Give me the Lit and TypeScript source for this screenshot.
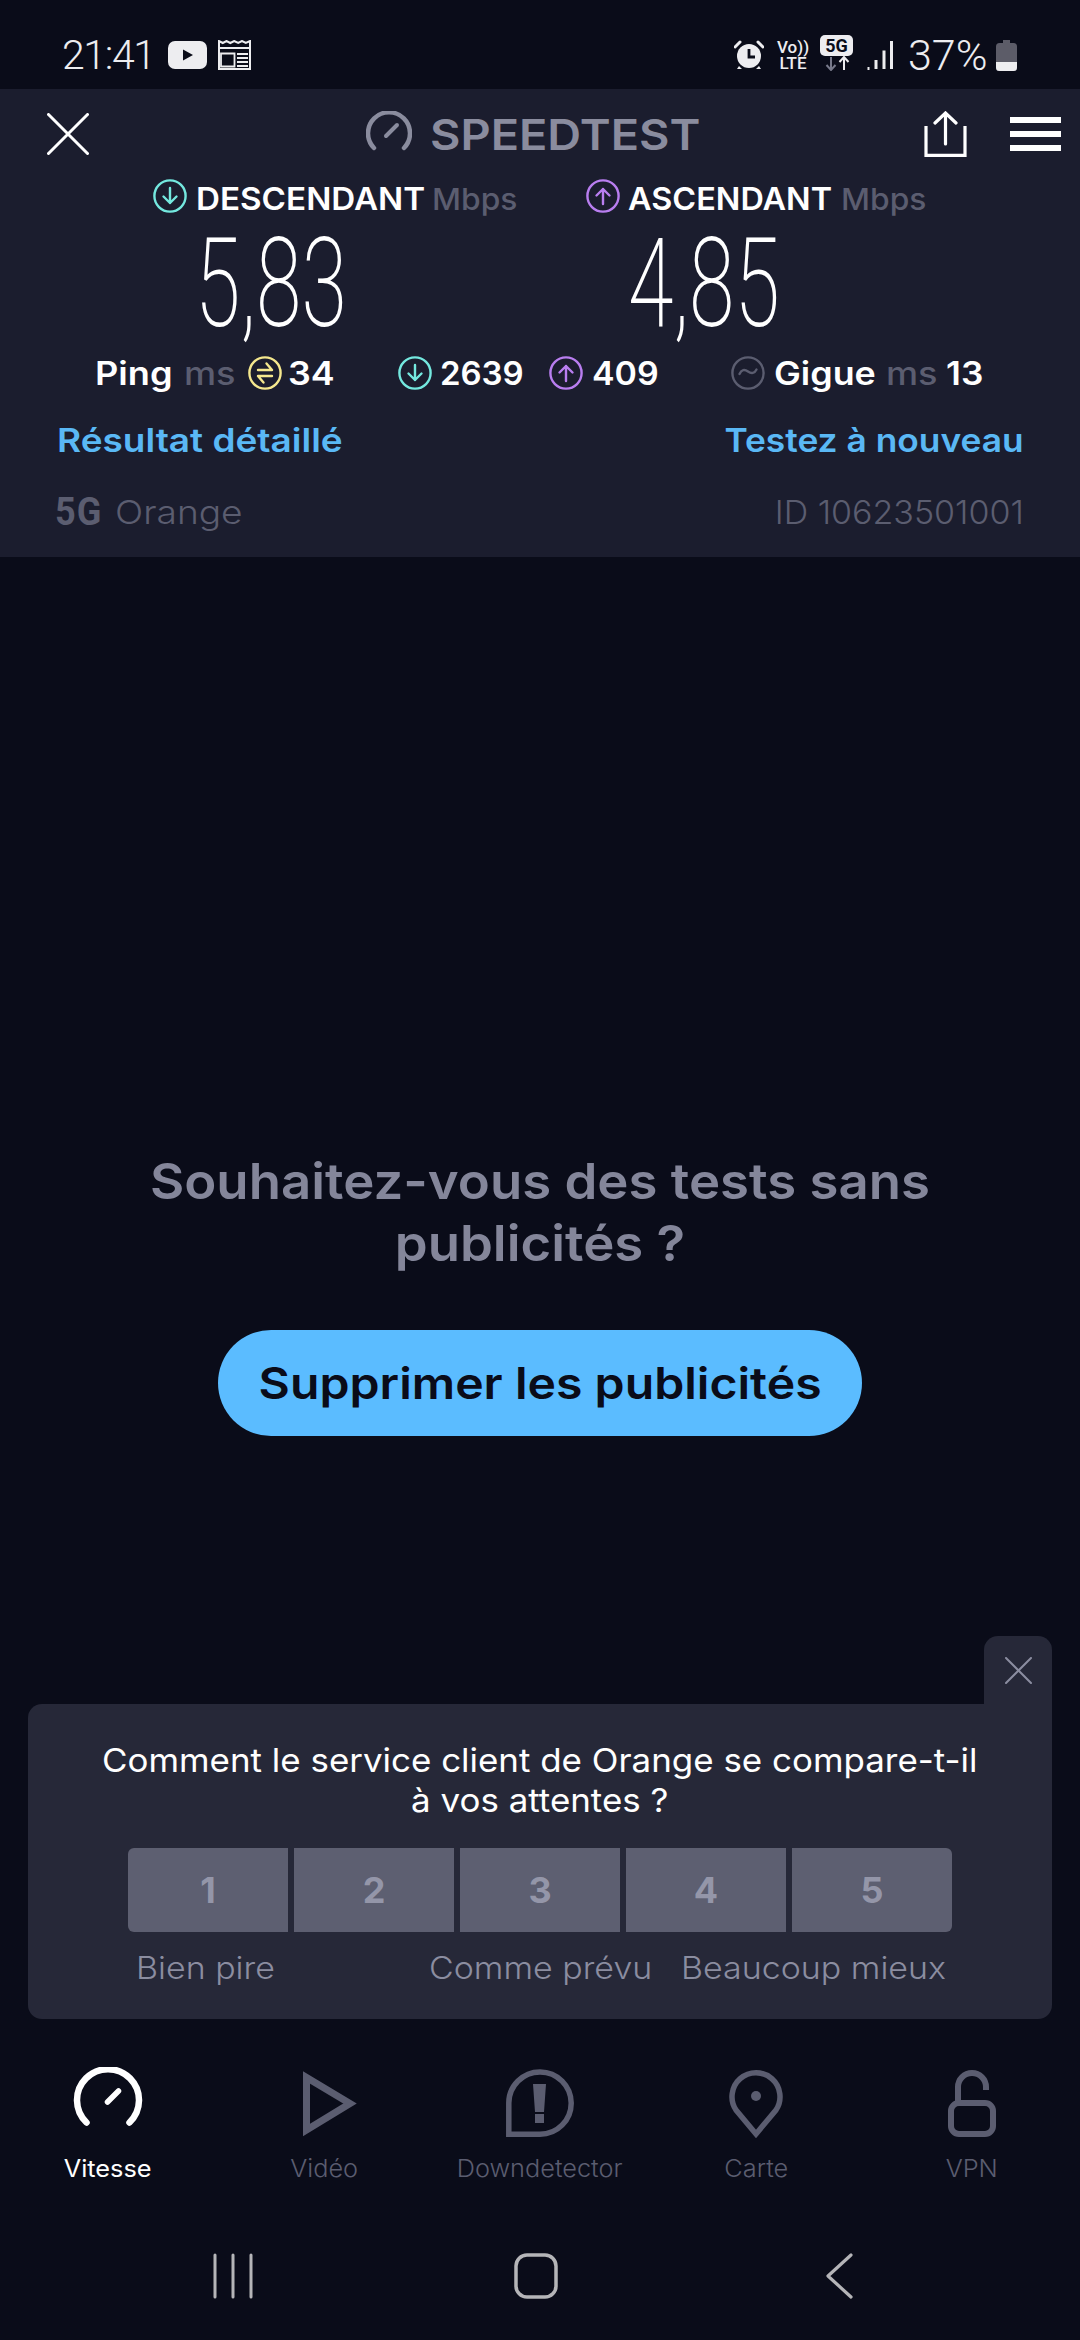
import { LitElement, html, css, svg } from "lit";
import { customElement } from "lit/decorators.js";

const circle = (color: string, inner: unknown) => html`<svg class="ci" viewBox="0 0 34 34" fill="none" stroke=${color} stroke-width="2.4" stroke-linecap="round" stroke-linejoin="round"><circle cx="17" cy="17" r="15.6"/>${inner}</svg>`;
const down = svg`<path d="M17 9v15M10.5 17.5 17 24l6.5-6.5"/>`;
const up = svg`<path d="M17 25V10M10.5 16.5 17 10l6.5 6.5"/>`;
const ping = svg`<path d="M10 14h14l-5.500-6.500M24 20H10l5.500 6.500"/>`;
const jitter = svg`<path d="M8.5 18c2-4.5 5-5 8.5-2.5s6.500 2 8.500-2" />`;

@customElement("app-root")
export class AppRoot extends LitElement {
  static styles = css`
    :host { display: block; width: 1080px; height: 2340px; background: #0a0c19; font-family: Inter, "Noto Sans", sans-serif; color: #fff; overflow: hidden; }
    .page { height: 2340px; display: flex; flex-direction: column; }
    svg { display: block; flex: none; }
    .status { height: 89px; flex: none; box-sizing: border-box; display: flex; align-items: center; padding: 21px 63px 0 62px; background: #0a0c19; color: #ededf0; }
    .time, .pct { font-family: Roboto, sans-serif; font-weight: 300; line-height: 40px; }
    .time { width: 88px; font-size: 41px; letter-spacing: -1.4px; margin-right: 18px; white-space: nowrap; }
    .yt { margin-right: 11px; }
    .grow { flex: 1; }
    .volte { width: 32px; margin: 0 11px 0 13px; font-family: Roboto, sans-serif; font-weight: 500; font-size: 17px; line-height: 16px; text-align: center; white-space: nowrap; }
    .pct { margin: 0 8px 0 15px; width: 80px; white-space: nowrap; font-size: 43px; }
    .fiveg { width: 33px; margin-right: 13px; display: flex; flex-direction: column; align-items: center; margin-top: -4px; }
    .fiveg b { display: block; width: 33px; height: 21px; border-radius: 5px; background: #ededf0; color: #0a0c19; font: 700 18px/21px Roboto, sans-serif; text-align: center; }
    .panel { height: 468px; flex: none; box-sizing: border-box; background: #1b1d2e; display: flex; flex-direction: column; }
    .top { height: 90px; flex: none; display: flex; align-items: center; box-sizing: border-box; padding: 0 19px 0 47px; }
    .brand { display: flex; align-items: center; gap: 18px; margin-left: 277px; margin-right: 224px; color: #8a8c9e; }
    .brand svg { margin-top: -6px; }
    .brand span { font-size: 42px; font-weight: 600; line-height: 50px; white-space: nowrap; width: 270px; margin-top: 1px; transform: scaleX(1.115); transform-origin: left center; }
    .speeds { display: flex; padding-left: 153px; height: 151px; flex: none; }
    .sp { display: flex; flex-direction: column; }
    .sp.a { width: 433px; }
    .lab { display: flex; align-items: center; height: 34px; white-space: nowrap; }
    .lab b { font-size: 31px; font-weight: 600; margin: 5px 0 0 9px; line-height: 34px; width: 227px; transform: scaleX(1.07); transform-origin: left center; }
    .sp.b .lab b { width: 204px; transform: scaleX(1.045); margin-left: 8px; }
    .lab i { font-style: normal; font-size: 30px; font-weight: 500; color: #5b5d70; margin: 5px 0 0 9px; line-height: 34px; transform: scaleX(1.06); transform-origin: left center; }
    .ci { width: 34px; height: 34px; }
    .num { font-family: Roboto, sans-serif; font-weight: 200; font-size: 125px; line-height: 100px; margin-top: 21px; margin-left: 42px; transform: scaleX(.66); transform-origin: left center; white-space: nowrap; }
    .stats { display: flex; align-items: center; height: 34px; margin-top: 26px; padding-left: 95px; font-size: 32px; font-weight: 600; white-space: nowrap; flex: none; }
    .stats .ci { margin-right: 6px; }
    .stats span, .stats i { transform-origin: left center; }
    .stats i { font-style: normal; color: #5b5d70; font-weight: 500; width: 52px; transform: scaleX(1.13); }
    .s1 { width: 77px; transform: scaleX(1.13); }
    .s2 { margin-left: 12px; margin-right: 12px; }
    .s3 { width: 44px; margin-right: 66px; transform: scaleX(1.12); }
    .s4 { width: 82px; margin-left: 2px; margin-right: 27px; transform: scaleX(1.03); }
    .s5 { width: 66px; margin-left: 3px; margin-right: 73px; transform: scaleX(1.06); }
    .s6 { width: 102px; margin-left: 3px; margin-right: 10px; transform: scaleX(1.12); }
    .s7 { margin-left: 8px; transform: scaleX(1.1); }
    .links { display: flex; justify-content: space-between; padding: 0 56px 0 57px; margin-top: 30px; height: 40px; line-height: 40px; color: #5ab8f5; font-size: 33px; font-weight: 600; flex: none; white-space: nowrap; }
    .links .l { transform: scaleX(1.12); transform-origin: left center; }
    .links .r { transform: scaleX(1.07); transform-origin: right center; }
    .meta { display: flex; justify-content: space-between; align-items: center; padding: 0 56px 0 55px; margin-top: 32px; height: 40px; color: #5b5d70; font-size: 33px; font-weight: 300; flex: none; white-space: nowrap; }
    .meta div { display: flex; align-items: center; }
    .meta .op { transform: scaleX(1.125); transform-origin: left center; margin-left: -1px; }
    .meta .id { transform: scaleX(1.03); transform-origin: right center; }
    .meta b { font: 700 38px/40px Roboto, sans-serif; width: 47px; margin-right: 14px; transform: scaleX(.95); transform-origin: left center; letter-spacing: 1px; }
    .main { flex: 1; display: flex; flex-direction: column; align-items: center; min-height: 0; }
    .main > * { flex: none; }
    .ask { margin: 593px 0 0; width: 900px; text-align: center; color: #84869a; font-size: 50px; font-weight: 600; line-height: 62px; transform: scaleX(1.055); }
    .cta { margin-top: 56px; width: 644px; height: 106px; border-radius: 53px; background: #5bbcff; color: #0a0c19; font-size: 44px; font-weight: 600; display: flex; align-items: center; justify-content: center; }
    .cta span { transform: scaleX(1.095); white-space: nowrap; }
    .survey { margin-top: 268px; width: 1024px; position: relative; background: #262838; border-radius: 14px 0 14px 14px; box-sizing: border-box; height: 315px; padding-top: 36px; display: flex; flex-direction: column; align-items: center; }
    .tab { position: absolute; right: 0; top: -68px; width: 68px; height: 68px; background: #262838; border-radius: 14px 14px 0 0; display: flex; align-items: center; justify-content: center; }
    .q { font-size: 33px; line-height: 40px; text-align: center; font-weight: 400; white-space: nowrap; transform: scaleX(1.058); }
    .scale { margin-top: 28px; display: flex; gap: 6px; }
    .scale div { width: 160px; height: 84px; background: #5d5f71; color: #9496a9; font-size: 36px; font-weight: 700; display: flex; align-items: center; justify-content: center; }
    .scale div:first-child { border-radius: 6px 0 0 6px; }
    .scale div:last-child { border-radius: 0 6px 6px 0; }
    .anchors { width: 100%; margin-top: 16px; height: 40px; color: #8b8da0; font-size: 31px; font-weight: 300; line-height: 40px; display: flex; white-space: nowrap; }
    .anchors span { transform: scaleX(1.095); transform-origin: left center; }
    .anchors span:nth-child(1) { margin-left: 108px; width: 293px; }
    .anchors span:nth-child(2) { width: 252px; }
    .tabs { height: 186px; display: grid; grid-template-columns: repeat(5, 216px); margin-top: 48px; }
    .t { display: flex; flex-direction: column; align-items: center; color: #5b5d70; font-size: 24px; font-weight: 300; white-space: nowrap; }
    .t span { transform: scaleX(1.055); }
    .t.on { color: #fff; font-weight: 400; }
    .t .ico { margin-bottom: 15px; }
    .sysrow { display: flex; padding-left: 213px; align-self: stretch; }
    .sp2 { margin-left: 261px; }
    .sp3 { margin-left: 268px; }
    .menu { margin-left: 43px; }
  `;

  render() {
    return html`<div class="page">
      <div class="status">
        <span class="time">21:41</span>
        <svg class="yt" width="39" height="28" viewBox="0 0 39 28"><rect width="39" height="28" rx="7" fill="#ededf0"/><path d="M15 8.5v11l10-5.500z" fill="#0a0c19"/></svg>
        <svg width="33" height="30" viewBox="0 0 33 30" fill="none" stroke="#ededf0" stroke-width="2"><path d="M1 29V1l3.800 2L8.500 1l3.800 2 3.900-2 4 2 3.800-2L27.800 3 32 1v28z"/><path d="M1 8h31"/><path d="M3 13.500h13.500v13H3z" stroke-width="1.800"/><path d="M19 14h11M19 18h11M19 22h11M19 26h11" stroke-width="2"/></svg>
        <span class="grow"></span>
        <svg width="30" height="30" viewBox="0 0 30 30"><path d="M1 7l5-5M29 7l-5-5" stroke="#ededf0" stroke-width="3" stroke-linecap="round"/><path d="M5 26l-2 3h5zM25 26l2 3h-5z" fill="#ededf0"/><circle cx="15" cy="16" r="12" fill="#ededf0"/><path d="M15 9v8h6" stroke="#0a0c19" stroke-width="2.800" fill="none"/></svg>
        <div class="volte">Vo))<br>LTE</div>
        <div class="fiveg"><b>5G</b><svg width="30" height="15" viewBox="0 0 30 15" fill="none" stroke-width="2"><path d="M9 1v12M4.500 9 9 14l4.500-5" stroke="#77798a"/><path d="M22 14V2M17.500 6 22 1l4.500 5" stroke="#ededf0"/></svg></div>
        <svg width="27" height="30" viewBox="0 0 27 30" fill="none" stroke="#ededf0" stroke-width="3"><path d="M1.500 29h2" stroke-width="4"/><path d="M10 29V20M18 29V10.500M25.500 29V1"/></svg>
        <span class="pct">37%</span>
        <svg width="21" height="31" viewBox="0 0 21 31"><path d="M7 0h7v3h3.500A3.500 3.500 0 0 1 21 6.500V27.500A3.500 3.500 0 0 1 17.500 31h-14A3.500 3.500 0 0 1 0 27.500V6.500A3.500 3.500 0 0 1 3.500 3H7z" fill="#5c5c68"/><path d="M0 22h21v5.500a3.500 3.500 0 0 1-3.500 3.500h-14A3.500 3.500 0 0 1 0 27.500z" fill="#ededf0"/></svg>
      </div>
      <div class="panel">
        <div class="top">
          <svg width="42" height="42" viewBox="0 0 42 42" stroke="#fff" stroke-width="3" stroke-linecap="round"><path d="M1.500 1.500l39 39M40.500 1.500l-39 39"/></svg>
          <div class="brand">
            <svg width="46" height="40" viewBox="0 0 46 40" fill="none" stroke="#8a8c9e" stroke-width="4.500" stroke-linecap="round"><path d="M8 37A21 21 0 1 1 38 37"/><path d="M20 25l11-11" stroke-width="4"/></svg>
            <span>SPEEDTEST</span>
          </div>
          <svg width="43" height="46" viewBox="0 0 43 46" fill="none" stroke="#fff" stroke-width="3.200" stroke-linecap="round"><path d="M21.500 33V2M11 12 21.500 2 32 12"/><path d="M2 16.500V44.400H41V16.500" stroke-linecap="square"/></svg>
          <svg class="menu" width="51" height="34" viewBox="0 0 51 34" fill="#fff"><rect width="51" height="6"/><rect y="14" width="51" height="6"/><rect y="28" width="51" height="6"/></svg>
        </div>
        <div class="speeds">
          <div class="sp a"><div class="lab">${circle("#74e8df", down)}<b>DESCENDANT</b><i>Mbps</i></div><div class="num">5,83</div></div>
          <div class="sp b"><div class="lab">${circle("#b97ef0", up)}<b>ASCENDANT</b><i>Mbps</i></div><div class="num">4,85</div></div>
        </div>
        <div class="stats">
          <span class="s1">Ping</span><i class="s2">ms</i>${circle("#f5e88e", ping)}<span class="s3">34</span>${circle("#74e8df", down)}<span class="s4">2639</span>${circle("#b97ef0", up)}<span class="s5">409</span>${circle("#5b5d70", jitter)}<span class="s6">Gigue</span><i>ms</i><span class="s7">13</span>
        </div>
        <div class="links"><span class="l">Résultat détaillé</span><span class="r">Testez à nouveau</span></div>
        <div class="meta"><div><b>5G</b><span class="op">Orange</span></div><span class="id">ID 10623501001</span></div>
      </div>
      <div class="main">
        <div class="ask">Souhaitez-vous des tests sans<br>publicités ?</div>
        <div class="cta"><span>Supprimer les publicités</span></div>
        <div class="survey">
          <div class="tab"><svg width="27" height="27" viewBox="0 0 27 27" stroke="#8b8da0" stroke-width="2" stroke-linecap="round"><path d="M1 1l25 25M26 1 1 26"/></svg></div>
          <div class="q">Comment le service client de Orange se compare-t-il<br>à vos attentes ?</div>
          <div class="scale"><div>1</div><div>2</div><div>3</div><div>4</div><div>5</div></div>
          <div class="anchors"><span>Bien pire</span><span>Comme prévu</span><span>Beaucoup mieux</span></div>
        </div>
        <div class="tabs">
          <div class="t on"><svg class="ico" width="72" height="72" viewBox="0 0 72 72" fill="none" stroke="#fff" stroke-width="6.500" stroke-linecap="round"><path d="M14.500 55.500A31 31 0 1 1 57.500 55.500"/><path d="M35.500 35l11-11" stroke-width="5.500"/></svg><span>Vitesse</span></div>
          <div class="t"><svg class="ico" width="72" height="72" viewBox="0 0 72 72" fill="none" stroke="#5b5d70" stroke-width="7"><path d="M18.500 10.500V63L62 36.500z"/></svg><span>Vidéo</span></div>
          <div class="t"><svg class="ico" width="72" height="72" viewBox="0 0 72 72" fill="none" stroke="#5b5d70" stroke-width="5.500"><path d="M4.800 67.300V36a31.200 31.200 0 1 1 31.200 31.300z"/><path d="M29 17h13l-2 28h-9zM31 47h9v9h-9z" fill="#5b5d70" stroke="none"/></svg><span>Downdetector</span></div>
          <div class="t"><svg class="ico" width="72" height="72" viewBox="0 0 72 72" fill="none" stroke="#5b5d70" stroke-width="5.500"><path d="M36 67 16 43A24 24 0 1 1 56 43z"/><circle cx="36" cy="29" r="5" fill="#5b5d70" stroke="none"/></svg><span>Carte</span></div>
          <div class="t"><svg class="ico" width="72" height="72" viewBox="0 0 72 72" fill="none" stroke="#5b5d70" stroke-width="6"><path d="M22 36V20a14 14 0 0 1 28 0v3"/><rect x="15" y="36" width="42" height="31" rx="8"/></svg><span>VPN</span></div>
        </div>
        <div class="sysrow">
          <svg width="40" height="46" viewBox="0 0 40 46" stroke="#b5b5b8" stroke-width="3" stroke-linecap="round"><path d="M2 2v42M20 2v42M38 2v42"/></svg>
          <svg class="sp2" width="44" height="46" viewBox="0 0 44 46" fill="none" stroke="#b5b5b8" stroke-width="3.500"><rect x="2" y="2" width="40" height="42" rx="11"/></svg>
          <svg class="sp3" width="27" height="46" viewBox="0 0 27 46" fill="none" stroke="#b5b5b8" stroke-width="3.200" stroke-linecap="round" stroke-linejoin="round"><path d="M25 2 2 23l23 21"/></svg>
        </div>
      </div>
    </div>`;
  }
}
